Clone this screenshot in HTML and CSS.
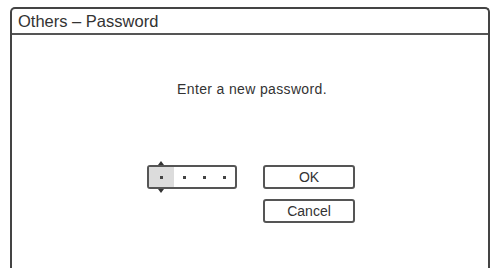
FILE: index.html
```html
<!DOCTYPE html>
<html>
<head>
<meta charset="utf-8">
<link rel="stylesheet" href="styles.css">
</head>
<body>
<div class="frame">
  <div class="header">Others – Password</div>
  <div class="content">
    <p class="message">Enter a new password.</p>
    <div class="controls">
      <div class="pin">
        <span class="cell active"><i class="dot"></i><b class="arrow up"></b><b class="arrow down"></b></span>
        <span class="cell"><i class="dot"></i></span>
        <span class="cell"><i class="dot"></i></span>
        <span class="cell"><i class="dot"></i></span>
      </div>
      <div class="buttons">
        <div class="btn">OK</div>
        <div class="btn">Cancel</div>
      </div>
    </div>
  </div>
</div>
</body>
</html>
```
FILE: styles.css
```css
html, body {
  margin: 0;
  padding: 0;
  background: #fff;
  overflow: hidden;
}
body {
  width: 493px;
  height: 270px;
  font-family: "Liberation Sans", Arial, sans-serif;
  color: #333;
}
.frame {
  margin: 7px 0 0 10px;
  width: 476px;
  height: 259px;
  border: 2px solid #444;
  border-bottom: none;
  border-radius: 5px 5px 0 0;
}
.header {
  height: 24px;
  line-height: 24px;
  padding-left: 6px;
  font-size: 16.5px;
  border-bottom: 2px solid #555;
  color: #333;
}
.content {
  display: flex;
  flex-direction: column;
}
.message {
  margin: 46px 0 0 0;
  text-align: center;
  font-size: 14px;
  letter-spacing: 0.35px;
  line-height: 16px;
  padding-left: 4px;
}
.controls {
  display: flex;
  align-items: flex-start;
  margin-top: 68px;
  padding-left: 135px;
  gap: 26px;
}
.pin {
  display: flex;
  width: 90px;
  height: 24px;
  box-sizing: border-box;
  border: 2px solid #555;
  border-radius: 3px;
}
.cell {
  position: relative;
  flex: 1;
  display: flex;
  align-items: center;
  justify-content: center;
}
.cell.active {
  flex: 0 0 25px;
  background: #dcdcdc;
}
.dot {
  display: block;
  width: 3px;
  height: 3px;
  background: #444;
  margin-top: 1px;
}
.arrow {
  position: absolute;
  left: 9px;
  width: 0;
  height: 0;
  border-left: 3px solid transparent;
  border-right: 3px solid transparent;
}
.arrow.up {
  top: -6px;
  border-bottom: 4px solid #333;
}
.arrow.down {
  bottom: -6px;
  border-top: 4px solid #333;
}
.buttons {
  display: flex;
  flex-direction: column;
  gap: 10px;
}
.btn {
  width: 92px;
  height: 24px;
  box-sizing: border-box;
  border: 2px solid #555;
  border-radius: 3px;
  text-align: center;
  line-height: 20px;
  font-size: 14px;
  color: #333;
}
```
